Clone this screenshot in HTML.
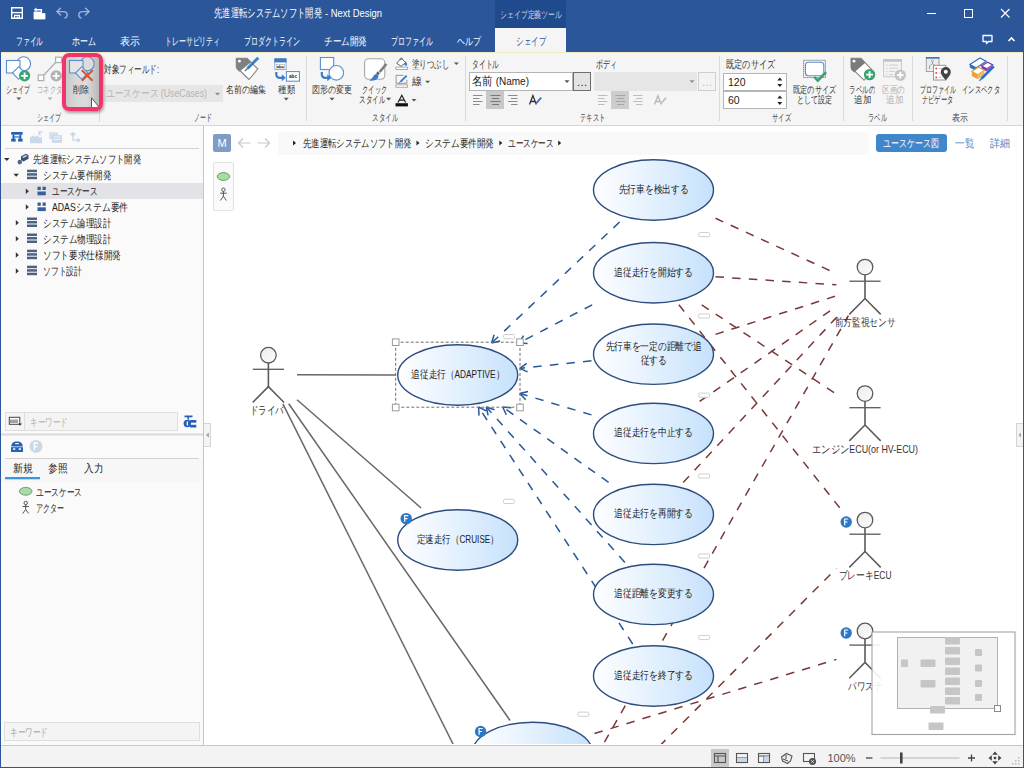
<!DOCTYPE html>
<html lang="ja">
<head>
<meta charset="utf-8">
<title>Next Design</title>
<style>
*{box-sizing:border-box;margin:0;padding:0}
html,body{width:1024px;height:768px;overflow:hidden;background:#fff}
body{position:relative;font-family:"Liberation Sans",sans-serif;font-size:11px;color:#222;line-height:1}
.abs{position:absolute}
.t{position:absolute;white-space:nowrap;line-height:1}
#titlebar{left:0;top:0;width:1024px;height:52px;background:#2b579a}
#ctxhead{left:495px;top:0;width:71px;height:28px;background:#1f4a8c}
#ctxtab{left:495px;top:28px;width:71px;height:25px;background:#f5f5f5}
#ribbon{left:0;top:52px;width:1024px;height:74px;background:#f5f5f5;border-top:1px solid #f0ecc0;border-bottom:1px solid #e3db96}
#leftpanel{left:0;top:126px;width:204px;height:619px;background:#fafafa;border-right:1px solid #c6c6c6}
#statusbar{left:0;top:745px;width:1024px;height:23px;background:#f3f3f3;border-top:1px solid #c9c9c9}
#winL{left:0;top:0;width:1px;height:768px;background:#2b579a}
#winB{left:0;top:767px;width:1024px;height:1px;background:#2b579a}
#winR{left:1023px;top:0;width:1px;height:768px;background:#2b579a}
.tab{color:#fff;font-size:11px;top:36px}
.rl{color:#333;font-size:9.5px}
.gl{color:#444;font-size:9.5px;top:113px}
.sep{position:absolute;top:56px;width:1px;height:65px;background:#dadada}
</style>
</head>
<body>
<div class="abs" id="titlebar"></div>
<div class="abs" id="ctxhead"></div>
<div class="abs" id="ctxtab"></div>
<div class="abs" id="ribbon"></div>
<div class="abs" id="leftpanel"></div>
<div class="abs" id="statusbar"></div>

<!-- quick access -->
<svg class="abs" style="left:10px;top:6px" width="84" height="14" viewBox="0 0 84 14">
 <g fill="none" stroke="#fff" stroke-width="1.4">
  <path d="M1.7 1.7h10.6v10.6H1.7z"/>
  <path d="M1.7 6.6h10.6" />
  <path d="M4.6 12.3v-3h4.8v3" stroke-width="1.2"/>
 </g>
 <rect x="6.7" y="10.4" width="1.4" height="1.9" fill="#fff"/>
 <g fill="#fff">
  <path d="M24 6h7l1.5 1.5H35V13H24z"/>
  <path d="M26.5 1.5l-2.8 2.3 2.8 2.3V4.6h4.2V6h1.4V3H26.5z"/>
 </g>
 <path d="M24 6h7l1.5 1.5H35V13H24z" fill="none" stroke="#fff" stroke-width="0.8"/>
 <g fill="none" stroke="#9fb4d8" stroke-width="1.4" stroke-linecap="round" stroke-linejoin="round">
  <path d="M50.5 2.2l-3.6 3.4 3.6 3.4"/>
  <path d="M47.2 5.6h6.2c2.3 0 3.8 1.5 3.8 3.3 0 1.500-.9 2.6-2.300 3"/>
  <path d="M75.500 2.2l3.600 3.400-3.600 3.400"/>
  <path d="M78.800 5.600h-6.200c-2.300 0-3.800 1.500-3.800 3.300 0 1.500.9 2.600 2.300 3"/>
 </g>
</svg>
<span class="t f" style="left:214px;top:8px;width:108px;color:#fff;font-size:11.500px">先進運転システムソフト開発</span><span class="t f" style="left:325px;top:8px;width:57px;color:#fff;font-size:11.500px">- Next Design</span>
<span class="t f" style="left:500px;top:10px;width:62px;color:#c9d5ea;font-size:9.500px">シェイプ定義ツール</span>
<span class="t f tab" style="left:16px;width:27px">ファイル</span>
<span class="t f tab" style="left:72px;width:24px">ホーム</span>
<span class="t f tab" style="left:120px;width:20px">表示</span>
<span class="t f tab" style="left:165px;width:55px">トレーサビリティ</span>
<span class="t f tab" style="left:244px;width:56px">プロダクトライン</span>
<span class="t f tab" style="left:324px;width:43px">チーム開発</span>
<span class="t f tab" style="left:391px;width:42px">プロファイル</span>
<span class="t f tab" style="left:457px;width:24px">ヘルプ</span>
<span class="t f tab" style="left:516px;width:30px;color:#2b579a">シェイプ</span>
<!-- window controls -->
<svg class="abs" style="left:920px;top:4px" width="100" height="44" viewBox="0 0 100 44">
 <g fill="none" stroke="#fff" stroke-width="1">
  <path d="M7 9.500h9"/>
  <rect x="44.500" y="5.500" width="8" height="8"/>
  <path d="M81 5l8.500 8.500M89.500 5L81 13.500" stroke-width="1.100"/>
  <path d="M63 31.500h9v6h-3.500l-2 2v-2H63z" stroke-width="1.300" stroke-linejoin="round"/>
  <path d="M88.500 37l3-3 3 3" stroke-width="1.600"/>
 </g>
</svg>


<!-- ribbon separators -->
<div class="sep" style="left:99px;top:110px;height:12px"></div>
<div class="sep" style="left:306px"></div>
<div class="sep" style="left:465px"></div>
<div class="sep" style="left:719px"></div>
<div class="sep" style="left:843px"></div>
<div class="sep" style="left:912px"></div>
<div class="sep" style="left:1007px"></div>
<!-- delete button highlight -->
<div class="abs" style="left:66px;top:57px;width:33px;height:50px;background:linear-gradient(90deg,#c9c9c9 0%,#d9d9d9 35%,#dcdcdc 60%,#b9b9b9 100%)"></div>
<!-- group 1 labels -->
<span class="t f rl" style="left:6px;top:85px;width:24px">シェイプ</span>
<span class="t f rl" style="left:37px;top:85px;width:25px;color:#a9a9a9">コネクタ</span>
<span class="t f rl" style="left:73px;top:85px;width:16px">削除</span>
<span class="t f gl" style="left:37px;width:24px">シェイプ</span>
<!-- group 2 -->
<span class="t f" style="left:104px;top:64px;width:55px;font-size:11px;color:#333">対象フィールド:</span>
<div class="abs" style="left:104px;top:85px;width:119px;height:17px;background:#e6e6e6"></div>
<span class="t f" style="left:106px;top:88px;width:101px;font-size:11px;color:#b4b4b4">ユースケース (UseCases)</span>
<span class="t f rl" style="left:226px;top:85px;width:40px">名前の編集</span>
<span class="t f rl" style="left:278px;top:85px;width:17px">種類</span>
<span class="t f gl" style="left:194px;width:18px">ノード</span>
<!-- group 3 -->
<span class="t f rl" style="left:312px;top:85px;width:40px">図形の変更</span>
<span class="t f rl" style="left:362px;top:85px;width:25px">クイック</span>
<span class="t f rl" style="left:359px;top:95px;width:26px">スタイル</span>
<span class="t f" style="left:412px;top:59px;width:37px;font-size:11px;color:#333">塗りつぶし</span>
<span class="t f" style="left:412px;top:76px;width:10px;font-size:11px;color:#333">線</span>
<span class="t f gl" style="left:372px;width:26px">スタイル</span>
<!-- group 4 -->
<span class="t f" style="left:472px;top:59px;width:27px;font-size:10.500px;color:#333">タイトル</span>
<div class="abs" style="left:469px;top:72px;width:104px;height:19px;background:#fff;border:1px solid #b5b5b5"></div>
<span class="t f" style="left:472px;top:76px;width:57px;font-size:11.500px;color:#222">名前 (Name)</span>
<div class="abs" style="left:573px;top:72px;width:18px;height:19px;background:#e3e3e3;border:1px solid #6e6e6e"></div>
<span class="t" style="left:577px;top:77px;font-size:11px;color:#222;letter-spacing:0.5px">...</span>
<div class="abs" style="left:486px;top:91px;width:18px;height:18px;background:#c8c8c8"></div>
<span class="t f" style="left:596px;top:59px;width:21px;font-size:10.500px;color:#333">ボディ</span>
<div class="abs" style="left:594px;top:72px;width:103px;height:19px;background:#e6e6e6"></div>
<div class="abs" style="left:698px;top:72px;width:18px;height:19px;background:#f3f3f3;border:1px solid #cfcfcf"></div>
<span class="t" style="left:702px;top:77px;font-size:11px;color:#bbb;letter-spacing:0.5px">...</span>
<div class="abs" style="left:611px;top:91px;width:18px;height:18px;background:#cdcdcd"></div>
<span class="t f gl" style="left:580px;width:25px">テキスト</span>
<!-- group 5 -->
<span class="t f" style="left:726px;top:59px;width:49px;font-size:10.500px;color:#333">既定のサイズ</span>
<div class="abs" style="left:723px;top:73px;width:64px;height:18px;background:#fff;border:1px solid #b5b5b5"></div>
<div class="abs" style="left:723px;top:91px;width:64px;height:18px;background:#fff;border:1px solid #b5b5b5"></div>
<span class="t" style="left:728px;top:77px;font-size:10.500px;color:#222">120</span>
<span class="t" style="left:728px;top:95px;font-size:10.500px;color:#222">60</span>
<span class="t f rl" style="left:793px;top:85px;width:43px">既定のサイズ</span>
<span class="t f rl" style="left:797px;top:95px;width:35px">として設定</span>
<span class="t f gl" style="left:772px;width:19px">サイズ</span>
<!-- group 6 -->
<span class="t f rl" style="left:849px;top:85px;width:26px">ラベルの</span>
<span class="t f rl" style="left:854px;top:95px;width:17px">追加</span>
<span class="t f rl" style="left:882px;top:85px;width:23px;color:#b0b0b0">区画の</span>
<span class="t f rl" style="left:886px;top:95px;width:17px;color:#b0b0b0">追加</span>
<span class="t f gl" style="left:868px;width:19px">ラベル</span>
<!-- group 7 -->
<span class="t f rl" style="left:920px;top:85px;width:36px">プロファイル</span>
<span class="t f rl" style="left:922px;top:95px;width:31px">ナビゲータ</span>
<span class="t f rl" style="left:962px;top:85px;width:38px">インスペクタ</span>
<span class="t f gl" style="left:952px;width:16px">表示</span>

<svg class="abs" style="left:0;top:52px" width="1024" height="74" viewBox="0 52 1024 74">
<!-- shape icon -->
<g fill="#fff" stroke="#5b8fd0" stroke-width="1.100">
 <circle cx="23.600" cy="63.800" r="7"/>
 <rect x="6.500" y="60.500" width="13.500" height="12.500"/>
 <path d="M18.700 66.700l6.300 6.300-6.300 6.300-6.300-6.300z"/>
</g>
<circle cx="24.600" cy="75.800" r="5.600" fill="#3ba272"/>
<path d="M24.600 72.400v6.800M21.200 75.800h6.800" stroke="#fff" stroke-width="1.800"/>
<path d="M16.3 97.4h5l-2.500 2.600z" fill="#555"/>
<!-- connector icon -->
<g fill="#fff" stroke="#adadad" stroke-width="1.200">
 <path d="M43.500 75.500L56 62" fill="none"/>
 <rect x="55.600" y="57.200" width="6" height="5.400"/>
 <rect x="38.200" y="75" width="5.600" height="5.600"/>
</g>
<circle cx="56.200" cy="75.800" r="5.600" fill="#b1b1b1"/>
<path d="M56.200 72.400v6.800M52.800 75.800h6.800" stroke="#fff" stroke-width="1.800"/>
<path d="M47.5 97.4h5l-2.500 2.600z" fill="#aaa"/>
<!-- delete icon -->
<g fill="#e9e9e9" stroke="#5b8fd0" stroke-width="1.100">
 <circle cx="87.200" cy="63.800" r="7" fill="#dcdcdc"/>
 <rect x="69.500" y="60.500" width="13.500" height="12.500" fill="#e4e4e4"/>
 <path d="M81.700 66.700l6.300 6.300-6.300 6.300-6.300-6.300z" fill="#e4e4e4"/>
</g>
<path d="M81.800 70.300l10.800 10.500M92.800 70.300l-11 10.500" stroke="#d9562a" stroke-width="2" fill="none"/>
<!-- cursor -->
<path d="M91.500 97.800V110.600H97.200L96.300 108.700H100.300z" fill="#fff" stroke="#333" stroke-width="0.800" stroke-linejoin="round"/>
<!-- combo arrow disabled -->
<path d="M215.0 92.8h5l-2.500 2.600z" fill="#8a8a8a"/>
<!-- tag edit icon -->
<path d="M236.300 58.300h10.800l10.700 10.700-8.800 10.500-12.700-12.500z" fill="#fff" stroke="#858585" stroke-width="1.100" stroke-linejoin="round"/>
<path d="M236.300 58.300h10.800l4 4-11.800 9.500-3-3z" fill="#808080"/>
<circle cx="239.400" cy="61.200" r="1.400" fill="#fff"/>
<path d="M258.300 57.800l-10.800 10.800" stroke="#3c7dc6" stroke-width="2.800" fill="none"/>
<path d="M247.800 68.200l-2.800 2.800" stroke="#3c7dc6" stroke-width="1.500" fill="none"/>
<!-- type icon -->
<rect x="274.800" y="58.800" width="11.300" height="10.800" fill="#fff" stroke="#7da7da" stroke-width="0.900"/>
<rect x="274.400" y="58.400" width="12.100" height="4" fill="#3d78c0"/>
<rect x="276.300" y="64.300" width="8.300" height="3.800" fill="#fff" stroke="#9a9a9a" stroke-width="0.500"/>
<text x="280.400" y="67.600" font-family="Liberation Sans, sans-serif" font-size="4.300" font-weight="bold" text-anchor="middle" fill="#222">abc</text>
<rect x="286.400" y="71.600" width="13" height="9.600" fill="#fff" stroke="#4f8ad0" stroke-width="1"/>
<text x="293" y="78" font-family="Liberation Sans, sans-serif" font-size="4.600" font-weight="bold" text-anchor="middle" fill="#222">abc</text>
<path d="M276.300 72v2.200c0 2.300 1.600 3.600 3.800 3.600h3" fill="none" stroke="#3d7cc6" stroke-width="2.200"/>
<path d="M281.800 74.300l4 3.500-4 3.500z" fill="#3d7cc6"/>
<path d="M283.7 97.8h5l-2.500 2.600z" fill="#555"/>
<!-- change shape icon -->
<rect x="320.400" y="57.500" width="13.300" height="12" fill="#fff" stroke="#5b8fd0" stroke-width="1.100"/>
<circle cx="336.300" cy="72.800" r="7.300" fill="#fff" stroke="#5b8fd0" stroke-width="1.100"/>
<path d="M321.800 72v2.200c0 2.300 1.600 3.600 3.800 3.600h3" fill="none" stroke="#3d7cc6" stroke-width="2.200"/>
<path d="M327.300 74.300l4 3.500-4 3.500z" fill="#3d7cc6"/>
<path d="M329.5 97.8h5l-2.500 2.600z" fill="#555"/>
<!-- quick style icon -->
<rect x="364.600" y="58.700" width="20.200" height="20.600" rx="4" fill="#fff" stroke="#a6a6a6" stroke-width="1.100"/>
<path d="M386.300 64l-6.600 8" stroke="#7d7d7d" stroke-width="2.600" fill="none"/>
<path d="M378.800 72.300l-1.500 1.800" stroke="#5e5e5e" stroke-width="3" fill="none"/>
<path d="M377.800 74.300c-2.800-.8-4 1-5 2.800-.8 1.500-1.800 2.700-3.600 3.400 4 .6 7.600-.3 8.900-3 .6-1.300.4-2.400-.3-3.200z" fill="#3d7cc6"/>
<path d="M386.1 97.8h5l-2.500 2.600z" fill="#555"/>
<!-- fill icon -->
<rect x="395.900" y="67.100" width="11.800" height="2.300" fill="#fff" stroke="#8c8c8c" stroke-width="0.700"/>
<path d="M399.500 60l-2.800 3.200 4.300 3.100 4.600-3.600-3.600-3.800z" fill="#fff" stroke="#555" stroke-width="0.900" stroke-linejoin="round"/>
<path d="M399.800 59.800c0-2.200 2.600-2.500 2.900-.3" fill="none" stroke="#555" stroke-width="0.800"/>
<path d="M405.600 61.200c1.300 1.600 2 2.800 1.300 4-.6.900-2 .8-2.400-.2-.4-1.100.4-2.300 1.100-3.800z" fill="#3d7cc6"/>
<path d="M453.9 62.5h5l-2.500 2.600z" fill="#555"/>
<!-- line icon -->
<path d="M403.500 75.300h-7.400v8h10.800v-3.500" fill="none" stroke="#8c8c8c" stroke-width="0.900"/>
<path d="M406.700 75.600l-6.300 6.300" stroke="#3d7cc6" stroke-width="2" fill="none"/>
<path d="M400.200 82.100l-1.300 1.200" stroke="#3d7cc6" stroke-width="1" fill="none"/>
<rect x="395.900" y="84.900" width="11.800" height="2.300" fill="#fff" stroke="#8c8c8c" stroke-width="0.700"/>
<path d="M425.1 80.7h5l-2.500 2.600z" fill="#555"/>
<!-- A icon -->
<path d="M398 102.500l3.800-7.300 3.800 7.300M399.400 100.200h4.800" fill="none" stroke="#222" stroke-width="1.200"/>
<rect x="395.500" y="103.200" width="12.400" height="3.200" fill="#111"/>
<path d="M411.5 99.0h5l-2.500 2.600z" fill="#555"/>
<!-- title combo arrow -->
<path d="M564.5 80.3h5l-2.500 2.600z" fill="#555"/>
<path d="M689.5 80.3h5l-2.500 2.600z" fill="#909090"/>
<!-- align icons (title) -->
<g stroke="#8a8a8a" stroke-width="1" fill="none">
 <path d="M473 95.500h9.500M473 98.500h6.500M473 101.500h9.500M473 104.500h6.500"/>
 <path d="M490.500 95.500h10M492 98.500h7M490.500 101.500h10M492 104.500h7" stroke="#777"/>
 <path d="M508 95.500h9.500M511 98.500h6.500M508 101.500h9.500M511 104.500h6.500"/>
</g>
<path d="M529.500 104.500l3.400-9 3.400 9M530.800 101.500h4.200" fill="none" stroke="#333" stroke-width="1.300"/>
<path d="M540.500 97l-4.500 5.300-.8 2 2-.9 4.600-5.200z" fill="#2f6fbd"/>
<!-- align icons (body, disabled) -->
<g stroke="#bdbdbd" stroke-width="1" fill="none">
 <path d="M598 95.500h9.500M598 98.500h6.500M598 101.500h9.500M598 104.500h6.500"/>
 <path d="M615.500 95.500h10M617 98.500h7M615.500 101.500h10M617 104.500h7" stroke="#a5a5a5"/>
 <path d="M633 95.500h9.500M636 98.500h6.500M633 101.500h9.500M636 104.500h6.500"/>
</g>
<path d="M654.500 104.500l3.400-9 3.400 9M655.800 101.500h4.200" fill="none" stroke="#b8b8b8" stroke-width="1.300"/>
<path d="M665.500 97l-4.500 5.300-.8 2 2-.9 4.600-5.200z" fill="#c2c2c2"/>
<!-- spinner arrows -->
<g fill="#222">
 <path d="M777.300 80.500l2.500-3 2.500 3zM777.300 84l2.500 3 2.500-3z"/>
 <path d="M777.300 98.500l2.500-3 2.500 3zM777.300 102l2.500 3 2.500-3z"/>
</g>
<!-- default size icon -->
<rect x="803.600" y="60.300" width="21.800" height="17.200" fill="none" stroke="#555" stroke-width="1" stroke-dasharray="1 1"/>
<rect x="805.400" y="62.200" width="18.400" height="13.500" rx="3" fill="#fff" stroke="#5b8fd0" stroke-width="1.100"/>
<path d="M814.300 77l3.500 3.600 8.300-8.500" fill="none" stroke="#3f9b73" stroke-width="2.500"/>
<!-- label add icon -->
<path d="M851 58.300h10l10.800 11.300-7.700 10.600-13.100-12.500z" fill="#fff" stroke="#858585" stroke-width="1.100" stroke-linejoin="round"/>
<path d="M851 58.300h10l4.200 4.400-11 9.700-3.200-3z" fill="#7b7b7b"/>
<circle cx="854" cy="61.200" r="1.400" fill="#fff"/>
<circle cx="869.600" cy="74.600" r="5.700" fill="#3ba272"/>
<path d="M869.600 71.200v6.800M866.200 74.600h6.800" stroke="#fff" stroke-width="1.800"/>
<!-- section add icon -->
<rect x="883.600" y="59.800" width="17.800" height="17" fill="#f3f3f3" stroke="#c9c9c9" stroke-width="1"/>
<rect x="883.200" y="59.300" width="18.600" height="2.400" fill="#c2c2c2"/>
<path d="M886 65h1.500M889 65h9M886 68.200h1.500M889 68.200h9M886 71.400h1.500M889 71.400h6M886 74.600h1.500M889 74.600h4" stroke="#cfcfcf" stroke-width="1"/>
<circle cx="900.300" cy="75.200" r="5.700" fill="#c4c4c4"/>
<path d="M900.300 71.800v6.800M896.900 75.200h6.800" stroke="#fff" stroke-width="1.800"/>
<!-- profile navigator icon -->
<rect x="926.300" y="57.500" width="12.700" height="14" fill="#ececec" stroke="#9a9a9a" stroke-width="0.900"/>
<rect x="925.900" y="57" width="13.500" height="1.700" fill="#3d78c0"/>
<path d="M932.500 60.500v3M929.500 66l3-2.500 3 2.500M929.500 66v3M935.500 66v3" stroke="#8a8a8a" stroke-width="0.800" fill="none"/>
<circle cx="932.500" cy="60.800" r="1.100" fill="#fff" stroke="#8a8a8a" stroke-width="0.600"/>
<rect x="933.500" y="65.300" width="12.300" height="14.700" fill="#fff" stroke="#8c8c8c" stroke-width="0.900"/>
<g fill="#e0452f"><circle cx="936.200" cy="68.500" r="0.900"/><circle cx="936.200" cy="73" r="0.900"/><circle cx="936.200" cy="77.500" r="0.900"/></g>
<path d="M938.500 68.500h4M938.500 73h3M938.500 77.500h3" stroke="#bbb" stroke-width="0.800"/>
<path d="M945.800 80.300c-2.700-3.300-5-5.600-5-8.300a5 5 0 0 1 10 0c0 2.700-2.300 5-5 8.300z" fill="#444"/>
<circle cx="945.800" cy="71.800" r="2" fill="#fff"/>
<!-- inspector icon -->
<path d="M969.800 64.500l10.200-6.500 6.200 3.200-10.200 6.700z" fill="#fff" stroke="#2d6cc0" stroke-width="1.200" stroke-linejoin="round"/>
<path d="M969.800 64.500l6.200 3.400v3l-6.200-3.400z" fill="#2d6cc0"/>
<path d="M981.500 66l6-3.800 5.300 2.700-6 3.900z" fill="#fff" stroke="#7a3aa8" stroke-width="1.200" stroke-linejoin="round"/>
<path d="M981.500 66l5.300 2.800v2.800l-5.300-2.800z" fill="#7a3aa8"/>
<path d="M986.800 68.800l6-3.900v2.500l-6 4.200z" fill="#9a5cc4"/>
<path d="M971.800 71.500l6.600-4.300 6 3.100-6.600 4.400z" fill="#fff" stroke="#e9a23b" stroke-width="1.200" stroke-linejoin="round"/>
<path d="M971.800 71.500l6 3.200v4.500l-6-3.200z" fill="#e9a23b"/>
<path d="M977.800 74.700l6.600-4.400v4.500l-6.600 4.400z" fill="#f0b865"/>
<path d="M993.800 66.300l-12.300 12.400" stroke="#2d6cc0" stroke-width="2.600" fill="none"/>
<path d="M981.800 78.300l-2.300 2.400" stroke="#2d6cc0" stroke-width="1.300" fill="none"/>
</svg>
<div class="abs" style="left:62px;top:53px;width:41px;height:58px;border:4px solid #f0356b;border-radius:7px;box-shadow:1px 2px 3px rgba(0,0,0,.35)"></div>



<div class="abs" style="left:1px;top:183px;width:202px;height:16px;background:#e2e2e7"></div>
<div class="abs" style="left:5px;top:412px;width:173px;height:19px;background:#f4f4f4;border:1px solid #dedede"></div>
<div class="abs" style="left:24px;top:413px;width:1px;height:17px;background:#dedede"></div>
<div class="abs" style="left:1px;top:459px;width:202px;height:23px;background:#f7f7f7"></div>
<div class="abs" style="left:4px;top:722px;width:196px;height:19px;background:#f4f4f4;border:1px solid #dedede"></div>
<div class="abs" style="left:204px;top:423px;width:7px;height:24px;background:#f4f4f4;border:1px solid #d4d4d4;border-left:none"></div>
<div class="abs" style="left:1016px;top:423px;width:7px;height:24px;background:#f4f4f4;border:1px solid #d4d4d4;border-right:none"></div>
<svg class="abs" style="left:0;top:126px" width="204" height="400" viewBox="0 126 204 400">
<g fill="#2461b3">
 <rect x="11.200" y="132" width="11.400" height="2.700"/>
 <rect x="12.500" y="134.500" width="1.900" height="4.500"/><rect x="19.400" y="134.500" width="1.900" height="4.500"/>
 <rect x="11.200" y="138.700" width="4.500" height="2.900"/><rect x="18.100" y="138.700" width="4.500" height="2.900"/>
 <rect x="14" y="136.400" width="6" height="1.100"/>
</g>
<g fill="#c9d8ea" transform="translate(0,0.700)">
 <path d="M30 142.500v-6l4-2v2l4-2v2h4v6z"/><rect x="38.500" y="130.500" width="2" height="4"/><rect x="40" y="130.500" width="2.600" height="1.300"/>
 <rect x="49" y="131.500" width="9" height="7" opacity=".75"/><rect x="52" y="134.500" width="10" height="7.500"/>
 <path d="M70 133.500l3-2.500 3 2.500-3 2.500zM76 139.500l2.300-2.300 2.300 2.300-2.300 2.300z"/><path d="M73 135v4.500h4" fill="none" stroke="#c9d8ea" stroke-width="1.300"/>
</g>
<g fill="#fff" opacity=".85"><rect x="53.500" y="136.500" width="7" height="1"/><rect x="53.500" y="139" width="7" height="1"/></g>

<rect x="5" y="148" width="194" height="1" fill="#d2d2d2"/>
<path d="M4.0 158.0h5.600l-2.800 3z" fill="#333"/>
<path d="M21.0 156.3l5-2.500 2.500 1.500v3.500l-5 2.800-2.500-1.500z" fill="#3a4e6e"/><path d="M22.0 157.10000000000002l4-2 1.500.9-4 2.100z" fill="#c8d4e6"/><circle cx="19.8" cy="162.10000000000002" r="2.300" fill="#55698a"/>
<path d="M13.4 173.7h5.600l-2.800 3z" fill="#333"/>
<rect x="27" y="169.7" width="10" height="2.500" fill="#4d6283"/>
<rect x="27" y="173.2" width="10" height="2.500" fill="#4d6283"/>
<rect x="27" y="176.7" width="10" height="2.500" fill="#4d6283"/>
<path d="M25.8 188.4v5.600l3-2.800z" fill="#333"/>
<rect x="37.5" y="186.7" width="3.300" height="3.300" fill="#3b5f98"/><rect x="42.5" y="186.7" width="3.300" height="3.300" fill="#3b5f98"/><rect x="37.5" y="191.5" width="8.300" height="3.800" fill="#3b5f98"/>
<path d="M25.8 204.2v5.600l3-2.800z" fill="#333"/>
<rect x="37.5" y="202.5" width="3.300" height="3.300" fill="#3b5f98"/><rect x="42.5" y="202.5" width="3.300" height="3.300" fill="#3b5f98"/><rect x="37.5" y="207.3" width="8.300" height="3.800" fill="#3b5f98"/>
<path d="M15.8 220.0v5.600l3-2.800z" fill="#333"/>
<rect x="27" y="217.5" width="10" height="2.500" fill="#4d6283"/>
<rect x="27" y="221.0" width="10" height="2.500" fill="#4d6283"/>
<rect x="27" y="224.5" width="10" height="2.500" fill="#4d6283"/>
<path d="M15.8 236.0v5.600l3-2.800z" fill="#333"/>
<rect x="27" y="233.5" width="10" height="2.500" fill="#4d6283"/>
<rect x="27" y="237.0" width="10" height="2.500" fill="#4d6283"/>
<rect x="27" y="240.5" width="10" height="2.500" fill="#4d6283"/>
<path d="M15.8 252.2v5.600l3-2.800z" fill="#333"/>
<rect x="27" y="249.7" width="10" height="2.500" fill="#4d6283"/>
<rect x="27" y="253.2" width="10" height="2.500" fill="#4d6283"/>
<rect x="27" y="256.7" width="10" height="2.500" fill="#4d6283"/>
<path d="M15.8 268.2v5.600l3-2.800z" fill="#333"/>
<rect x="27" y="265.7" width="10" height="2.500" fill="#4d6283"/>
<rect x="27" y="269.2" width="10" height="2.500" fill="#4d6283"/>
<rect x="27" y="272.7" width="10" height="2.500" fill="#4d6283"/>
<rect x="9.300" y="417.300" width="10.500" height="7" fill="#fff" stroke="#444" stroke-width="1"/>
<path d="M11 423v-3.500M13 423v-3.500M15 423v-3.500M17 423v-3.500" stroke="#444" stroke-width="1"/>
<path d="M18.300 423.500h3.600l-1.800 2.300z" fill="#333"/>
<g fill="#2660b5"><rect x="184.500" y="415.500" width="8" height="1.800"/><rect x="187.500" y="417" width="1.600" height="2.500"/><circle cx="187.300" cy="423.500" r="3.700"/>
<rect x="190" y="420" width="6.300" height="2.700"/><rect x="190" y="424.800" width="6.300" height="2.700"/></g>
<rect x="186.700" y="421.500" width="1.300" height="4" fill="#fff"/>
<rect x="0" y="433.500" width="203" height="2" fill="#d9d9d9"/>
<g fill="#2763b3"><path d="M11.300 446.500c0-3 1.700-5 5.700-5s5.700 2 5.700 5z"/><rect x="11" y="447.200" width="12" height="4.800"/></g>
<rect x="15.200" y="443" width="3.600" height="1.200" fill="#fff"/><rect x="13" y="448.300" width="2.300" height="1.500" fill="#fff"/><rect x="18.700" y="448.300" width="2.300" height="1.500" fill="#fff"/>
<circle cx="36" cy="446.400" r="6.400" fill="#c9d9e8"/>
<path d="M34.300 450v-7h3.800M34.300 446.500h3" fill="none" stroke="#fff" stroke-width="1.300"/>
<rect x="5" y="458" width="194" height="1" fill="#d2d2d2"/>
<rect x="5" y="477" width="35" height="2.300" fill="#3a96dd"/>
<ellipse cx="25.700" cy="491.300" rx="6.300" ry="3.900" fill="#a8dba8" stroke="#5e9a5e" stroke-width="0.900"/>
<g fill="none" stroke="#444" stroke-width="0.900"><circle cx="25.700" cy="503" r="1.700" fill="#fff"/><path d="M25.700 504.700v4.800M22.500 506.500h6.400M25.700 509.500l-3 4M25.700 509.500l3 4"/></g>

</svg>
<span class="t f" style="left:33px;top:154.1px;width:108px;font-size:11px;color:#222">先進運転システムソフト開発</span>
<span class="t f" style="left:42.5px;top:169.8px;width:68px;font-size:11px;color:#222">システム要件開発</span>
<span class="t f" style="left:52px;top:186.0px;width:45.5px;font-size:11px;color:#222">ユースケース</span>
<span class="t f" style="left:52px;top:201.8px;width:76px;font-size:11px;color:#222">ADASシステム要件</span>
<span class="t f" style="left:42.5px;top:217.6px;width:68px;font-size:11px;color:#222">システム論理設計</span>
<span class="t f" style="left:42.5px;top:233.6px;width:68px;font-size:11px;color:#222">システム物理設計</span>
<span class="t f" style="left:42.5px;top:249.8px;width:78px;font-size:11px;color:#222">ソフト要求仕様開発</span>
<span class="t f" style="left:42.5px;top:265.8px;width:39px;font-size:11px;color:#222">ソフト設計</span>
<span class="t f" style="left:29.5px;top:416.500px;width:38px;font-size:10.500px;color:#b3b3b3">キーワード</span>
<span class="t f" style="left:12.500px;top:462.500px;width:20px;font-size:11px;color:#222">新規</span>
<span class="t f" style="left:48px;top:462.500px;width:19.500px;font-size:11px;color:#222">参照</span>
<span class="t f" style="left:83.700px;top:462.500px;width:19px;font-size:11px;color:#222">入力</span>
<span class="t f" style="left:36px;top:486.500px;width:46px;font-size:11px;color:#222">ユースケース</span>
<span class="t f" style="left:36px;top:502.500px;width:28px;font-size:11px;color:#222">アクター</span>
<span class="t f" style="left:9.500px;top:727px;width:38px;font-size:10.500px;color:#a8a8a8">キーワード</span>


<!-- main header -->
<div class="abs" style="left:213px;top:134px;width:18px;height:18px;background:#7f9bc6;border-radius:2px"></div>
<span class="t" style="left:217.500px;top:137.500px;font-size:11px;color:#fff">M</span>
<svg class="abs" style="left:236px;top:136px" width="36" height="14" viewBox="236 136 36 14"><g fill="none" stroke="#c9c9c9" stroke-width="1.200"><path d="M250.500 143h-12M243 138.500l-4.500 4.500 4.500 4.500"/><path d="M257.500 143h12M265 138.500l4.500 4.500-4.500 4.500"/></g></svg>
<div class="abs" style="left:278px;top:132px;width:591px;height:23px;background:#f9f9f9;border-radius:3px"></div>
<svg class="abs" style="left:290px;top:138px" width="275" height="10" viewBox="290 138 275 10"><g fill="#222"><path d="M293 140.500v5l3-2.500z"/><path d="M416.500 140.500v5l3-2.500z"/><path d="M499.300 140.500v5l3-2.500z"/><path d="M558.200 140.500v5l3-2.500z"/></g></svg>
<span class="t f" style="left:302.500px;top:137.500px;width:108.500px;font-size:11px;color:#222">先進運転システムソフト開発</span>
<span class="t f" style="left:424.500px;top:137.500px;width:69px;font-size:11px;color:#222">システム要件開発</span>
<span class="t f" style="left:507.800px;top:137.500px;width:45.500px;font-size:11px;color:#222">ユースケース</span>
<div class="abs" style="left:875.500px;top:134px;width:71px;height:18px;background:#4086cb;border-radius:3px"></div>
<span class="t f" style="left:882.500px;top:137.500px;width:56px;font-size:11px;color:#fff">ユースケース図</span>
<span class="t f" style="left:955px;top:137.500px;width:19px;font-size:11px;color:#3a83c9">一覧</span>
<span class="t f" style="left:989.500px;top:137.500px;width:20px;font-size:11px;color:#3a83c9">詳細</span>
<!-- palette -->
<div class="abs" style="left:213px;top:162px;width:21px;height:49px;background:#fafafa;border:1px solid #e2e2e2;border-radius:2px"></div>
<svg class="abs" style="left:213px;top:162px" width="21" height="49" viewBox="213 162 21 49"><ellipse cx="223.400" cy="176.500" rx="6.200" ry="3.900" fill="#a8dba8" stroke="#5e9a5e" stroke-width="0.900"/>
<g fill="none" stroke="#444" stroke-width="0.900"><circle cx="223.400" cy="189.700" r="1.700" fill="#fff"/><path d="M223.400 191.400v4.800M220.200 193.200h6.400M223.400 196.200l-3 4.300M223.400 196.200l3 4.300"/></g></svg>
<!--DIAG-START--><svg class="abs" style="left:204px;top:126px" width="820" height="618" viewBox="204 126 820 618">
<defs><linearGradient id="ucg" x1="0" y1="0" x2="1" y2="0"><stop offset="0" stop-color="#fefeff"/><stop offset="0.45" stop-color="#e6f2fe"/><stop offset="1" stop-color="#c6e1fb"/></linearGradient><linearGradient id="hg" x1="0" y1="0" x2="1" y2="1"><stop offset="0" stop-color="#ececec"/><stop offset="1" stop-color="#fbfbfb"/></linearGradient></defs>
<g fill="none" stroke="#676767" stroke-width="1.500">
<path d="M297.0 374.8L395.8 374.9"/>
<path d="M297.0 399.8L421.1 508.0"/>
<path d="M288.7 403.8L510.1 720.5"/>
<path d="M282.9 403.8L495.5 829.0"/>
</g>
<g fill="none" stroke="#7a3838" stroke-width="1.500" stroke-dasharray="8.500 8.200">
<path d="M715.5 218.3L836.4 273.6"/>
<path d="M715.5 276.8L836.4 284.8"/>
<path d="M715.5 334.4L836.4 295.8"/>
<path d="M699.6 401.4L836.4 306.5"/>
<path d="M683.2 482.4L838.1 315.7"/>
<path d="M554.7 829.0L848.4 315.7"/>
<path d="M701.7 304.8L836.4 394.2"/>
<path d="M678.9 304.8L842.0 510.7"/>
<path d="M577.0 829.0L836.4 568.4"/>
<path d="M594.5 733.5L836.4 659.4"/>
</g>
<g fill="none" stroke="#28589a" stroke-width="1.500" stroke-dasharray="8.500 8.200">
<path d="M619.6 222.0L491.6 343.0"/>
<path d="M592.2 304.8L519.0 343.0"/>
<path d="M591.5 360.8L519.8 368.4"/>
<path d="M591.5 414.9L519.8 393.5"/>
<path d="M608.6 482.4L502.7 407.0"/>
<path d="M624.9 562.4L486.3 407.0"/>
<path d="M632.7 644.0L478.6 407.0"/>
</g>
<path d="M500.0 341.0L491.6 343.0M494.1 334.8L491.6 343.0M527.6 343.4L519.0 343.0M523.6 335.7L519.0 343.0M527.6 371.9L519.8 368.4M526.7 363.3L519.8 368.4M525.7 399.7L519.8 393.5M528.1 391.5L519.8 393.5M506.3 414.8L502.7 407.0M511.2 407.8L502.7 407.0M488.1 415.4L486.3 407.0M494.5 409.7L486.3 407.0M479.0 415.6L478.6 407.0M486.2 410.9L478.6 407.0" fill="none" stroke="#28589a" stroke-width="1.500"/>
<g font-family="Liberation Sans, sans-serif" font-size="10.500" fill="#222">
<ellipse cx="653.5" cy="190.0" rx="60" ry="30.200" fill="url(#ucg)" stroke="#2e4d7c" stroke-width="1.400"/>
<text x="618.5" y="192.9" textLength="70" lengthAdjust="spacingAndGlyphs">先行車を検出する</text>
<ellipse cx="653.5" cy="272.75" rx="60" ry="30.200" fill="url(#ucg)" stroke="#2e4d7c" stroke-width="1.400"/>
<text x="614.0" y="275.6" textLength="79" lengthAdjust="spacingAndGlyphs">追従走行を開始する</text>
<ellipse cx="653.5" cy="354.2" rx="60" ry="30.200" fill="url(#ucg)" stroke="#2e4d7c" stroke-width="1.400"/>
<text x="605.5" y="350.2" textLength="96" lengthAdjust="spacingAndGlyphs">先行車を一定の距離で追</text>
<text x="640.5" y="364.0" textLength="26" lengthAdjust="spacingAndGlyphs">従する</text>
<ellipse cx="653.5" cy="433.4" rx="60" ry="30.200" fill="url(#ucg)" stroke="#2e4d7c" stroke-width="1.400"/>
<text x="614.0" y="436.3" textLength="79" lengthAdjust="spacingAndGlyphs">追従走行を中止する</text>
<ellipse cx="653.5" cy="514.4" rx="60" ry="30.200" fill="url(#ucg)" stroke="#2e4d7c" stroke-width="1.400"/>
<text x="614.0" y="517.3" textLength="79" lengthAdjust="spacingAndGlyphs">追従走行を再開する</text>
<ellipse cx="653.5" cy="594.4" rx="60" ry="30.200" fill="url(#ucg)" stroke="#2e4d7c" stroke-width="1.400"/>
<text x="614.0" y="597.3" textLength="79" lengthAdjust="spacingAndGlyphs">追従距離を変更する</text>
<ellipse cx="653.5" cy="676.0" rx="60" ry="30.200" fill="url(#ucg)" stroke="#2e4d7c" stroke-width="1.400"/>
<text x="614.0" y="678.9" textLength="79" lengthAdjust="spacingAndGlyphs">追従走行を終了する</text>
<ellipse cx="457.75" cy="375.0" rx="60" ry="30.200" fill="url(#ucg)" stroke="#2e4d7c" stroke-width="1.400"/>
<text x="411.2" y="377.9" textLength="93" lengthAdjust="spacingAndGlyphs">追従走行（ADAPTIVE）</text>
<ellipse cx="457.75" cy="540.0" rx="60" ry="30.200" fill="url(#ucg)" stroke="#2e4d7c" stroke-width="1.400"/>
<text x="416.8" y="542.9" textLength="82" lengthAdjust="spacingAndGlyphs">定速走行（CRUISE）</text>
<ellipse cx="532.5" cy="752.5" rx="60" ry="30.200" fill="url(#ucg)" stroke="#2e4d7c" stroke-width="1.400"/>
<g fill="none" stroke="#5a5a5a" stroke-width="1.300"><circle cx="268.4" cy="355.2" r="7.800" fill="url(#hg)"/><path d="M252.8 369.3h31.200"/><path d="M268.4 363.0v24" stroke-width="1.600"/><path d="M268.4 386.6l-15.700 15.900M268.4 386.6l15.700 15.900" stroke-width="1.500"/></g>
<text x="249.6" y="414.4" textLength="34.5" lengthAdjust="spacingAndGlyphs" fill="#333">ドライバ</text>
<g fill="none" stroke="#5a5a5a" stroke-width="1.300"><circle cx="865.0" cy="267.1" r="7.800" fill="url(#hg)"/><path d="M849.4 281.2h31.200"/><path d="M865.0 274.9v24" stroke-width="1.600"/><path d="M865.0 298.5l-15.700 15.900M865.0 298.5l15.700 15.900" stroke-width="1.500"/></g>
<text x="834.5" y="326.3" textLength="61" lengthAdjust="spacingAndGlyphs" fill="#333">前方監視センサ</text>
<g fill="none" stroke="#5a5a5a" stroke-width="1.300"><circle cx="865.0" cy="393.6" r="7.800" fill="url(#hg)"/><path d="M849.4 407.7h31.200"/><path d="M865.0 401.4v24" stroke-width="1.600"/><path d="M865.0 425.0l-15.700 15.900M865.0 425.0l15.700 15.900" stroke-width="1.500"/></g>
<text x="812.0" y="452.8" textLength="106" lengthAdjust="spacingAndGlyphs" fill="#333">エンジンECU(or HV-ECU)</text>
<g fill="none" stroke="#5a5a5a" stroke-width="1.300"><circle cx="865.0" cy="520.1" r="7.800" fill="url(#hg)"/><path d="M849.4 534.2h31.200"/><path d="M865.0 527.9v24" stroke-width="1.600"/><path d="M865.0 551.5l-15.700 15.900M865.0 551.5l15.700 15.900" stroke-width="1.500"/></g>
<text x="838.5" y="579.3" textLength="53" lengthAdjust="spacingAndGlyphs" fill="#333">ブレーキECU</text>
<g fill="none" stroke="#5a5a5a" stroke-width="1.300"><circle cx="865.0" cy="631.0" r="7.800" fill="url(#hg)"/><path d="M849.4 645.1h31.200"/><path d="M865.0 638.8v24" stroke-width="1.600"/><path d="M865.0 662.4l-15.700 15.900M865.0 662.4l15.700 15.900" stroke-width="1.500"/></g>
<text x="848.0" y="690.2" textLength="34" lengthAdjust="spacingAndGlyphs" fill="#333">パワステ</text>
</g>
<rect x="395.700" y="342.200" width="124.300" height="65" fill="none" stroke="#6e6e6e" stroke-width="1" stroke-dasharray="3 2"/>
<rect x="392.4" y="338.9" width="6.600" height="6.600" fill="#fff" stroke="#9a9a9a" stroke-width="1"/>
<rect x="516.7" y="338.9" width="6.600" height="6.600" fill="#fff" stroke="#9a9a9a" stroke-width="1"/>
<rect x="392.4" y="404.2" width="6.600" height="6.600" fill="#fff" stroke="#9a9a9a" stroke-width="1"/>
<rect x="516.7" y="404.2" width="6.600" height="6.600" fill="#fff" stroke="#9a9a9a" stroke-width="1"/>
<rect x="698.7" y="232.5" width="10.800" height="4.200" rx="1" fill="#fff" stroke="#cfcfcf" stroke-width="1"/>
<rect x="698.7" y="313.9" width="10.800" height="4.200" rx="1" fill="#fff" stroke="#cfcfcf" stroke-width="1"/>
<rect x="698.7" y="393.1" width="10.800" height="4.200" rx="1" fill="#fff" stroke="#cfcfcf" stroke-width="1"/>
<rect x="698.7" y="473.9" width="10.800" height="4.200" rx="1" fill="#fff" stroke="#cfcfcf" stroke-width="1"/>
<rect x="698.7" y="553.9" width="10.800" height="4.200" rx="1" fill="#fff" stroke="#cfcfcf" stroke-width="1"/>
<rect x="698.7" y="635.4" width="10.800" height="4.200" rx="1" fill="#fff" stroke="#cfcfcf" stroke-width="1"/>
<rect x="503.5" y="499.3" width="10.800" height="4.200" rx="1" fill="#fff" stroke="#cfcfcf" stroke-width="1"/>
<rect x="578.0" y="712.1" width="10.800" height="4.200" rx="1" fill="#fff" stroke="#cfcfcf" stroke-width="1"/>
<rect x="503.7" y="334.5" width="10.800" height="4.200" rx="1" fill="#fff" stroke="#cfcfcf" stroke-width="1"/>
<circle cx="406.2" cy="518.6" r="5.700" fill="#2a78c6"/><path d="M404.7 521.8v-6.200h3.600M404.7 518.6h2.800" fill="none" stroke="#fff" stroke-width="1.200"/>
<circle cx="846.2" cy="522" r="5.700" fill="#2a78c6"/><path d="M844.7 525.2v-6.200h3.600M844.7 522.0h2.800" fill="none" stroke="#fff" stroke-width="1.200"/>
<circle cx="846.2" cy="633" r="5.700" fill="#2a78c6"/><path d="M844.7 636.2v-6.200h3.600M844.7 633.0h2.800" fill="none" stroke="#fff" stroke-width="1.200"/>
<circle cx="480.6" cy="731.5" r="5.700" fill="#2a78c6"/><path d="M479.1 734.7v-6.200h3.600M479.1 731.5h2.800" fill="none" stroke="#fff" stroke-width="1.200"/>
<rect x="872" y="632" width="143" height="102.500" fill="#fff" fill-opacity="0.880" stroke="#a3a3a3" stroke-width="1.100"/>
<rect x="897.500" y="637.500" width="100" height="71" fill="#efefef" fill-opacity="0.900" stroke="#b0b0b0" stroke-width="1"/>
<g fill="#c6c6c6">
<rect x="945" y="637" width="15" height="7.500" rx="1"/><rect x="945" y="647" width="15" height="7.500" rx="1"/><rect x="945" y="657.500" width="15" height="7.500" rx="1"/><rect x="945" y="667.500" width="15" height="7.500" rx="1"/><rect x="945" y="677.500" width="15" height="7.500" rx="1"/><rect x="945" y="687.500" width="15" height="7.500" rx="1"/><rect x="945" y="697" width="15" height="7.500" rx="1"/>
<rect x="920.500" y="659.500" width="15" height="7.500" rx="1"/><rect x="920.500" y="680" width="15" height="7.500" rx="1"/>
<rect x="901" y="659.500" width="7" height="7.500" rx="1"/>
<rect x="975" y="649" width="7" height="7" rx="1"/><rect x="975" y="664.500" width="7" height="7" rx="1"/><rect x="975" y="680" width="7" height="7" rx="1"/><rect x="975" y="694" width="7" height="7" rx="1"/>
<rect x="930" y="706" width="15" height="7.500" rx="1"/><rect x="928.500" y="722.500" width="15" height="7.500" rx="1"/>
</g>
<rect x="994.500" y="705.500" width="6" height="6" fill="#fff" stroke="#8a8a8a" stroke-width="1"/>

</svg><!--DIAG-END-->
<svg class="abs" style="left:204px;top:423px" width="820" height="24" viewBox="204 423 820 24"><path d="M208.800 432.500v5l-2.600-2.500z" fill="#999"/><path d="M1021 432.500v5l-2.600-2.500z" fill="#a5a5a5"/></svg>


<div class="abs" style="left:711px;top:749px;width:18px;height:18px;background:#c8c8c8"></div>
<svg class="abs" style="left:700px;top:746px" width="324" height="22" viewBox="700 745 324 22">
<g fill="none" stroke="#555" stroke-width="1.100">
<rect x="714.500" y="752.500" width="11" height="9"/><path d="M714.500 755h11M718 755v6.500"/>
<rect x="736.500" y="752.500" width="11" height="9"/><path d="M736.500 757h11"/>
<rect x="758.500" y="752.500" width="11" height="9"/><path d="M758.500 755h11M764 755v6.500"/>
<path d="M781.500 756l5-3.500 5.500 2.500-1.500 5-3 2.500-5-2.500z"/><path d="M783 758l5 2M786 754v4"/>
<rect x="803.500" y="752.500" width="11" height="8"/><circle cx="812.500" cy="760.500" r="3" fill="#555"/>
</g>
<rect x="737" y="757" width="10" height="4" fill="#c6d7ec"/><rect x="764" y="755.500" width="5" height="5.500" fill="#c6d7ec"/>
<path d="M811.300 759.300l2.400 2.400M813.700 759.300l-2.400 2.400" stroke="#fff" stroke-width="0.800"/>
<path d="M866 757h6.500" stroke="#444" stroke-width="1.300"/>
<path d="M880.500 757h79" stroke="#b5b5b5" stroke-width="1"/>
<rect x="900" y="751.500" width="2.600" height="11" fill="#444"/>
<path d="M968 757h7M971.500 753.500v7" stroke="#444" stroke-width="1.300"/>
<g fill="#444"><path d="M995 750.500l2.800 3.300h-5.600zM995 763.500l2.800-3.300h-5.600zM988.500 757l3.300-2.800v5.600zM1001.500 757l-3.300-2.800v5.600z"/><rect x="993.800" y="755.800" width="2.400" height="2.400"/></g>
<g fill="#bdbdbd"><rect x="1018" y="762" width="1.500" height="1.500"/><rect x="1015" y="762" width="1.500" height="1.500"/><rect x="1018" y="759" width="1.500" height="1.500"/><rect x="1012" y="762" width="1.500" height="1.500"/><rect x="1015" y="759" width="1.500" height="1.500"/><rect x="1018" y="756" width="1.500" height="1.500"/></g>
</svg>
<span class="t" style="left:827.500px;top:753px;font-size:11px;color:#555">100%</span>

<div class="abs" id="winL"></div>
<div class="abs" id="winB"></div>
<div class="abs" id="winR"></div>
<script>
(function(){var els=document.querySelectorAll('.f');for(var i=0;i<els.length;i++){var e=els[i];var w=parseFloat(e.style.width);if(!w)continue;e.style.width='auto';var n=e.getBoundingClientRect().width;if(n>0){var al=e.className.indexOf('ctr')>=0?'50% 50%':'0 50%';e.style.transformOrigin=al;var tr=e.className.indexOf('ctr')>=0?'translateX(-50%) ':'';e.style.transform=tr+'scaleX('+(w/n)+')';}}})();
</script>
</body>
</html>
